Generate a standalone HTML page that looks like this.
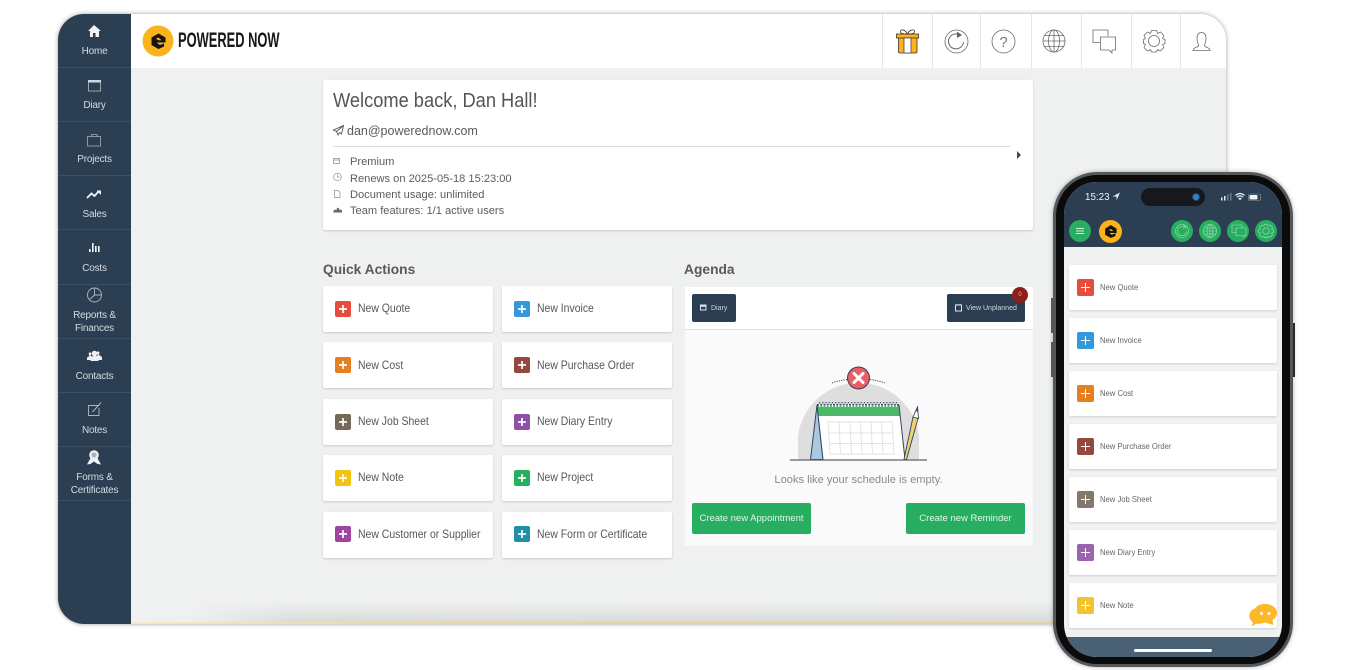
<!DOCTYPE html>
<html><head><meta charset="utf-8"><style>
*{box-sizing:border-box}
html,body{margin:0;padding:0;width:1353px;height:670px;overflow:hidden;background:#fff;font-family:"Liberation Sans",sans-serif}
.a{position:absolute}
.win{position:absolute;left:58px;top:14px;width:1168px;height:610px;border-radius:26px;background:#eff0f0;box-shadow:0 0 5px rgba(0,0,0,.38);overflow:hidden}
.side{position:absolute;left:58px;top:14px;width:73px;height:610px;background:#2c3e52;border-radius:26px 0 0 26px}
.sd{position:absolute;left:58px;width:73px;height:1px;background:#3d4f62}
.sl{position:absolute;left:58px;width:73px;text-align:center;color:#d5dbe0;font-size:10px;line-height:13px;letter-spacing:-.2px}
.vd{position:absolute;top:14px;width:1px;height:54px;background:#e6e6e6}
.card{position:absolute;background:#fff;box-shadow:0 1px 2px rgba(0,0,0,.16);border-radius:2px}
.qt{position:absolute;color:#585858;font-size:11.8px;line-height:14px;white-space:nowrap;transform:scaleX(.885);transform-origin:0 0}
.ic{position:absolute;width:16px;height:16px;border-radius:2px}
.ic:before{content:"";position:absolute;left:4px;top:7px;width:8px;height:2px;background:rgba(255,255,255,.85)}
.ic:after{content:"";position:absolute;left:7px;top:4px;width:2px;height:8px;background:rgba(255,255,255,.85)}
.row{position:absolute;left:350px;color:#5c5c5c;font-size:11.1px;line-height:14px;white-space:nowrap}
.gbtn{position:absolute;top:503px;width:119px;height:31px;background:#27ae60;border-radius:2px;color:#e4f5ea;font-size:9.5px;line-height:31px;text-align:center}
.dbtn{position:absolute;top:294px;height:28px;background:#2c3e52;border-radius:2px;color:#cfd6dc;font-size:7px;line-height:28px;padding-top:1px}
.pc{position:absolute;left:1069px;width:208px;height:45px;background:#fff;box-shadow:0 1px 2px rgba(0,0,0,.14);border-radius:2px}
.pi{position:absolute;left:1077px;width:17px;height:17px;border-radius:2px}
.pi:before{content:"";position:absolute;left:4px;top:8px;width:9px;height:1px;background:#fff}
.pi:after{content:"";position:absolute;left:8px;top:4px;width:1px;height:9px;background:#fff}
.pt{position:absolute;left:1100px;color:#666;font-size:8.2px;line-height:12px;white-space:nowrap;transform:scaleX(.935);transform-origin:0 0}
.pb{position:absolute;width:22px;height:22px;border-radius:50%;background:#27ae60;top:220px}
svg{position:absolute;overflow:visible}
</style></head><body>
<div class="win">
  <div class="a" style="left:73px;top:0;width:1095px;height:54px;background:#fff"></div>
  <div class="a" style="left:130px;top:588px;width:1038px;height:20px;background:linear-gradient(to bottom,rgba(205,205,205,0),rgba(210,210,210,.75));-webkit-mask-image:linear-gradient(to right,transparent,#000 110px);mask-image:linear-gradient(to right,transparent,#000 110px)"></div>
  <div class="a" style="left:73px;top:608px;width:1095px;height:2px;background:linear-gradient(to right,#f5e8c6,#e6d6a4 30%,#e2d29f)"></div>
</div>
<div class="side"></div>
<div class="sd" style="top:67px"></div><div class="sd" style="top:121px"></div><div class="sd" style="top:175px"></div><div class="sd" style="top:229px"></div><div class="sd" style="top:284px"></div><div class="sd" style="top:338px"></div><div class="sd" style="top:392px"></div><div class="sd" style="top:446px"></div><div class="sd" style="top:500px"></div>
<div class="sl" style="top:45px">Home</div>
<div class="sl" style="top:99px">Diary</div>
<div class="sl" style="top:153px">Projects</div>
<div class="sl" style="top:208px">Sales</div>
<div class="sl" style="top:262px">Costs</div>
<div class="sl" style="top:309px">Reports &amp;<br>Finances</div>
<div class="sl" style="top:370px">Contacts</div>
<div class="sl" style="top:424px">Notes</div>
<div class="sl" style="top:471px">Forms &amp;<br>Certificates</div>

<svg style="left:58px;top:14px" width="73" height="500" viewBox="0 0 73 500" fill="none">
  <path d="M36 11 L30 17 H32 V23 H35 V19 H37.500 V23 H41 V17 H43 Z" fill="#f2f4f5"/>
  <g stroke="#b4bdc6" stroke-width=".8"><rect x="30.500" y="66.500" width="12" height="10.500"/></g><rect x="30" y="66" width="13" height="2.500" fill="#d2d8dd"/>
  <g stroke="#a6b0ba" stroke-width=".8"><rect x="29.500" y="122.500" width="13" height="9.500"/><path d="M33.500 122.500V120.500H39V122.500"/></g>
  <path d="M29 184 L33.500 179.500 L36.500 182 L41 177" stroke="#f2f4f5" stroke-width="1.800"/><path d="M38.500 176.500H43V181Z" fill="#f2f4f5"/>
  <path d="M31 238h1.600v-3H31zM34 238h1.600v-9H34zM37 238h1.600v-6H37zM40 238h1.600v-6H40z" fill="#f2f4f5"/>
  <circle cx="36.500" cy="281" r="7" stroke="#aeb7c0" stroke-width=".9"/><path d="M36.500 274V281L31.500 285.500M36.500 281H43.500" stroke="#aeb7c0" stroke-width=".9"/>
  <path d="M29 346v-2.500l2.500-1.500-1-2.500 1.500-1.500 1.500 1.500-1 2 3 2v2.500z M37 346v-3l3-2-1.500-2.500 1.500-1.500 1.500 1.500-.5 2.500 3 2v3z" fill="#eef1f3"/><circle cx="36.500" cy="339.500" r="2.800" fill="#eef1f3"/><path d="M32.500 347v-3.500l4-2 4 2v3.500z" fill="#eef1f3"/>
  <path d="M41 391.500H30.500V401.500H41V394" stroke="#aeb7c0" stroke-width=".9"/><path d="M34.500 398L43 388.500" stroke="#c9d0d6" stroke-width=".9"/>
  <circle cx="36" cy="441" r="4.800" fill="#eef1f3"/><circle cx="36" cy="441" r="2.500" fill="#aab4bc"/><path d="M32.500 444L29 450.500L32.500 450L36 447.500L39.500 450L43 450.500L39.500 444Z" fill="#eef1f3"/>
</svg>

<svg style="left:142px;top:25px" width="32" height="32" viewBox="0 0 32 32">
  <circle cx="16" cy="16" r="15.500" fill="#fbb31d"/>
  <path d="M16.500 8.500L23.500 12.500V17.500H14.500L17.800 20L22 18.500V21.500L16.500 24L9.500 20V12.500ZM14 13.800L16.300 15.300H19.500L16.500 12.500Z" fill="#151515"/>
</svg>
<div class="a" style="left:178px;top:28px;font-size:21px;line-height:25px;font-weight:bold;color:#181818;white-space:nowrap;transform:scaleX(.613);transform-origin:0 0">POWERED NOW</div>

<div class="vd" style="left:882px"></div><div class="vd" style="left:932px"></div><div class="vd" style="left:980px"></div><div class="vd" style="left:1031px"></div><div class="vd" style="left:1081px"></div><div class="vd" style="left:1131px"></div><div class="vd" style="left:1180px"></div>

<svg style="left:890px;top:24px" width="330" height="34" viewBox="890 24 330 34" fill="none">
  <path d="M898.500 37H917V51.500Q917 53 915.500 53H900Q898.500 53 898.500 51.500Z" fill="#fbb31d" stroke="#3c3325" stroke-width=".8"/>
  <rect x="896.500" y="34" width="22" height="4" fill="#fbb31d" stroke="#3c3325" stroke-width=".8"/>
  <rect x="904" y="38" width="7" height="15" fill="#fff" stroke="#3c3325" stroke-width=".7"/>
  <path d="M907.500 34C905 29 900.500 29 900.500 31.500S904 34 907.500 34C911 34 914.500 34 914.500 31.500S910 29 907.500 34Z" stroke="#3c3325" stroke-width=".8"/>
  <circle cx="956.500" cy="41.500" r="11.500" stroke="#6a6a6a" stroke-width=".8"/>
  <path d="M960 35A7.500 7.500 0 1 0 963.500 42" stroke="#6a6a6a" stroke-width="1"/><path d="M957 31.500L962 35L957 38Z" fill="#5f5f5f"/>
  <circle cx="1003.500" cy="41.500" r="11.500" stroke="#6a6a6a" stroke-width=".8"/>
  <text x="1003.500" y="47" font-size="15" fill="#777" text-anchor="middle" font-family="Liberation Sans">?</text>
  <g stroke="#6a6a6a" stroke-width=".8"><circle cx="1054" cy="41" r="11"/><ellipse cx="1054" cy="41" rx="5.500" ry="11"/><path d="M1054 30V52M1043 41H1065M1044.500 35.500H1063.500M1044.500 46.500H1063.500"/></g>
  <path d="M1108 36V30H1093V42.500H1100" stroke="#6a6a6a" stroke-width=".8"/>
  <path d="M1100.500 37H1115.500V50H1112L1112 53L1109 50H1100.500Z" stroke="#6a6a6a" stroke-width=".8" fill="#fff"/>
  <path d="M1151.500 30.500H1156.500L1157.500 33.500L1160.500 32L1164 35.500L1162.500 38.500L1165 39.500V43.500L1162.500 44.500L1164 47.500L1160.500 51L1157.500 49.500L1156.500 52H1151.500L1150.500 49.500L1147.500 51L1144 47.500L1145.500 44.500L1143.500 43.500V39.500L1145.500 38.500L1144 35.500L1147.500 32L1150.500 33.500Z" stroke="#6a6a6a" stroke-width=".8" stroke-linejoin="round"/>
  <circle cx="1154" cy="41" r="5.500" stroke="#6a6a6a" stroke-width=".8"/>
  <path d="M1193 50.500C1193 47.500 1198 47.500 1198.500 45.500C1198.500 44 1197 42.500 1197 38C1197 34.500 1199 32.500 1201.500 32.500S1206 34.500 1206 38C1206 42.500 1204.500 44 1204.500 45.500C1205 47.500 1210 47.500 1210 50.500Z" stroke="#6a6a6a" stroke-width=".8"/>
</svg>

<!-- welcome -->
<div class="card" style="left:323px;top:80px;width:710px;height:150px"></div>
<div class="a" style="left:333px;top:88px;font-size:20.400px;line-height:26px;color:#555;white-space:nowrap;transform:scaleX(.895);transform-origin:0 0">Welcome back, Dan Hall!</div>
<svg style="left:333px;top:125px" width="12" height="11" viewBox="0 0 12 11" fill="none"><path d="M10.500 .5L.5 5L3.500 6.500L5 10L6.500 7.500L8.500 9ZM10.500 .5L3.500 6.500" stroke="#555" stroke-width=".9"/></svg>
<div class="a" style="left:347px;top:123px;font-size:12.500px;line-height:16px;color:#5a5a5a;white-space:nowrap">dan@powerednow.com</div>
<div class="a" style="left:333px;top:146px;width:677px;height:1px;background:#dcdcdc"></div>
<div class="a" style="left:1017px;top:151px;width:0;height:0;border-left:4.500px solid #444;border-top:4px solid transparent;border-bottom:4px solid transparent"></div>
<svg style="left:333px;top:156px" width="12" height="60" viewBox="0 0 12 60" fill="none" stroke="#8a8a8a" stroke-width=".7">
  <rect x=".5" y="2.500" width="6" height="5"/><path d="M.5 4H6.500"/>
  <circle cx="4.500" cy="21" r="3.800"/><path d="M4.500 18.500V21H6.500"/>
  <path d="M1.500 34.500H5L7 36.500V41.500H1.500Z"/>
  <path d="M.5 56.500V54.500L2 53.500L3.500 54.500V56.500ZM3.500 56.500V53L5 51.500L6.500 53V56.500ZM6.500 56.500V54.500L8 53.500L9 54.500V56.500Z" fill="#666" stroke="none"/>
</svg>
<div class="row" style="top:155px">Premium</div>
<div class="row" style="top:172px">Renews on 2025-05-18 15:23:00</div>
<div class="row" style="top:188px">Document usage: unlimited</div>
<div class="row" style="top:204px">Team features: 1/1 active users</div>

<!-- quick actions -->
<div class="a" style="left:323px;top:261px;font-size:13.800px;line-height:17px;font-weight:bold;color:#5a5a5a;white-space:nowrap">Quick Actions</div>
<div class="a" style="left:684px;top:261px;font-size:13.800px;line-height:17px;font-weight:bold;color:#5a5a5a;white-space:nowrap">Agenda</div>

<div class="card" style="left:323px;top:286px;width:170px;height:46px"></div><div class="ic" style="left:335px;top:301px;background:#e74c3c"></div><div class="qt" style="left:358px;top:301px">New Quote</div>
<div class="card" style="left:502px;top:286px;width:170px;height:46px"></div><div class="ic" style="left:514px;top:301px;background:#3498db"></div><div class="qt" style="left:537px;top:301px">New Invoice</div>
<div class="card" style="left:323px;top:342px;width:170px;height:46px"></div><div class="ic" style="left:335px;top:357px;background:#e67e22"></div><div class="qt" style="left:358px;top:358px">New Cost</div>
<div class="card" style="left:502px;top:342px;width:170px;height:46px"></div><div class="ic" style="left:514px;top:357px;background:#95483f"></div><div class="qt" style="left:537px;top:358px">New Purchase Order</div>
<div class="card" style="left:323px;top:399px;width:170px;height:46px"></div><div class="ic" style="left:335px;top:414px;background:#75695a"></div><div class="qt" style="left:358px;top:414px">New Job Sheet</div>
<div class="card" style="left:502px;top:399px;width:170px;height:46px"></div><div class="ic" style="left:514px;top:414px;background:#8e50a8"></div><div class="qt" style="left:537px;top:414px">New Diary Entry</div>
<div class="card" style="left:323px;top:455px;width:170px;height:46px"></div><div class="ic" style="left:335px;top:470px;background:#f1c40f"></div><div class="qt" style="left:358px;top:470px">New Note</div>
<div class="card" style="left:502px;top:455px;width:170px;height:46px"></div><div class="ic" style="left:514px;top:470px;background:#27ae60"></div><div class="qt" style="left:537px;top:470px">New Project</div>
<div class="card" style="left:323px;top:512px;width:170px;height:46px"></div><div class="ic" style="left:335px;top:526px;background:#a0459f"></div><div class="qt" style="left:358px;top:527px">New Customer or Supplier</div>
<div class="card" style="left:502px;top:512px;width:170px;height:46px"></div><div class="ic" style="left:514px;top:526px;background:#1f90a8"></div><div class="qt" style="left:537px;top:527px">New Form or Certificate</div>

<!-- agenda -->
<div class="a" style="left:685px;top:287px;width:348px;height:259px;background:#fafafa"></div>
<div class="a" style="left:685px;top:287px;width:348px;height:43px;background:#fff;border-bottom:1px solid #e2e2e2"></div>
<div class="dbtn" style="left:692px;width:44px;padding-left:19px">Diary</div>
<div class="dbtn" style="left:947px;width:78px;padding-left:19px;white-space:nowrap">View Unplanned</div>
<svg style="left:700px;top:304px" width="8" height="8" viewBox="0 0 8 8" fill="none"><rect x=".5" y="1" width="5.500" height="5" stroke="#dfe4e8"/><path d="M.5 1H6V2.800H.5Z" fill="#dfe4e8"/></svg>
<svg style="left:955px;top:304px" width="8" height="8" viewBox="0 0 8 8" fill="none"><rect x=".5" y="1" width="6" height="6" stroke="#dfe4e8"/><path d="M2 0V1.500M5 0V1.500" stroke="#dfe4e8"/></svg>
<div class="a" style="left:1012px;top:287px;width:16px;height:16px;border-radius:50%;background:#8f1f1a;color:#e7b4a5;font-size:6px;line-height:16px;text-align:center">0</div>

<svg style="left:780px;top:360px" width="160" height="110" viewBox="780 360 160 110" fill="none">
  <path d="M798 459.500V436A61 61 0 0 1 919 436V459.500Z" fill="#dedede"/>
  <path d="M832 383Q839 380.500 847 379.500M870 379.500Q878 380.500 885 383" stroke="#444" stroke-dasharray="1.200 1.200"/>
  <path d="M817 405L810.500 459.500H823Z" fill="#a9c9e2" stroke="#31445c" stroke-width="1"/>
  <path d="M817 405H899L905 459.500H823Z" fill="#fff"/>
  <path d="M817 404.500H899L900.500 416H818.500Z" fill="#4fb868"/>
  <path d="M817 405L823 459.500M899 405L905 459.500M817 404.500H899" stroke="#31445c" stroke-width="1"/>
  <path d="M819 405.500H897" stroke="#fff" stroke-width="3" stroke-dasharray="1.300 1.900"/>
  <path d="M819 402.700H897" stroke="#31445c" stroke-width="1.200" stroke-dasharray="1.300 1.900"/>
  <g stroke="#e3e3e3" stroke-width="1"><path d="M828 422H892L894 454H830Z"/><path d="M829 433H893M830 443.500H893.500M839 422L840.500 454M850 422L851.500 454M860.500 422L862 454M871 422L872.500 454M881.500 422L883 454"/></g>
  <path d="M904 459.500L913 417L918 418.500L906.500 459.500Z" fill="#eed36e" stroke="#31445c" stroke-width=".9"/>
  <path d="M913 417L917.500 407L918.500 418.500Z" fill="#fff" stroke="#31445c" stroke-width=".9"/>
  <path d="M916 411L918 407L918.200 412Z" fill="#31445c"/>
  <path d="M790 460H927" stroke="#5f6268" stroke-width="1.200"/>
  <circle cx="858.500" cy="378" r="11" fill="#ea5f66" stroke="#31445c" stroke-width="1"/>
  <path d="M854 373.500L863 382.500M863 373.500L854 382.500" stroke="#fff" stroke-width="3" stroke-linecap="round"/>
</svg>
<div class="a" style="left:685px;top:473px;width:347px;text-align:center;font-size:11.100px;line-height:14px;color:#8a8a8a">Looks like your schedule is empty.</div>
<div class="gbtn" style="left:692px">Create new Appointment</div>
<div class="gbtn" style="left:906px">Create new Reminder</div>

<!-- phone -->
<div class="a" style="left:1053px;top:172px;width:240px;height:495px;border-radius:44px;background:#0b0b0b;border:3px solid #55585a;box-shadow:0 0 5px rgba(0,0,0,.3)"></div>
<div class="a" style="left:1293px;top:323px;width:2px;height:54px;background:#2a2a2a"></div>
<div class="a" style="left:1051px;top:298px;width:2px;height:35px;background:#555"></div>
<div class="a" style="left:1051px;top:342px;width:2px;height:35px;background:#555"></div>
<div class="a" style="left:1064px;top:182px;width:218px;height:475px;border-radius:33px;background:#f0f1f1;overflow:hidden">
  <div class="a" style="left:0;top:0;width:218px;height:65px;background:#2c3e52"></div>
  <div class="a" style="left:0;top:455px;width:218px;height:20px;background:#4a6075"></div>
</div>
<div class="a" style="left:1141px;top:188px;width:64px;height:18px;border-radius:9px;background:#16181b"></div>
<div class="a" style="left:1193px;top:194px;width:6px;height:6px;border-radius:50%;background:#2e86c8;box-shadow:0 0 0 1px #25455f"></div>
<div class="a" style="left:1085px;top:191px;color:#eef1f3;font-size:9.800px;line-height:13px;white-space:nowrap">15:23</div>
<svg style="left:1112px;top:192px" width="9" height="9" viewBox="0 0 9 9"><path d="M8 .5L.5 4.500H4.500V8.500Z" fill="#e8ecef"/></svg>
<svg style="left:1220px;top:192px" width="46" height="10" viewBox="0 0 46 10" fill="none">
  <path d="M1 5.500h1.500v3H1zM4 4h1.500v4.500H4z" fill="#e8ecef"/><path d="M7 2.500h1.500v6H7zM10 1h1.500v7.500H10z" fill="#6c7c8b"/>
  <path d="M15.500 3.500Q20 -.5 24.500 3.500M17 5.300Q20 2.500 23 5.300" stroke="#e8ecef" stroke-width="1.200"/><path d="M18.300 6.500Q20 5 21.700 6.500L20 8.500Z" fill="#e8ecef"/>
  <rect x="28.500" y="2" width="12" height="6.500" rx="1.500" stroke="#8a98a5" stroke-width=".6"/><rect x="29.500" y="3" width="8" height="4.500" rx="1" fill="#f2f4f5"/>
</svg>

<div class="pb" style="left:1069px"></div>
<svg style="left:1075px;top:227px" width="10" height="8" viewBox="0 0 10 8"><path d="M1 1.500H9M1 4H9M1 6.500H9" stroke="#d6efdf" stroke-width="1"/></svg>
<svg style="left:1099px;top:220px" width="23" height="23" viewBox="0 0 32 32"><circle cx="16" cy="16" r="16" fill="#fbb31d"/><path d="M16.500 7L24.500 12V18H14.500L17.800 20.500L23 18.500V22L16.500 25L8.500 20.500V12ZM14 13.500L16.300 15.300H20L16.500 12.500Z" fill="#151515"/></svg>
<div class="pb" style="left:1171px"></div><div class="pb" style="left:1199px"></div><div class="pb" style="left:1227px"></div><div class="pb" style="left:1255px"></div>
<svg style="left:1171px;top:220px" width="106" height="22" viewBox="0 0 106 22" fill="none" stroke="#a9e0bd" stroke-width=".6">
  <circle cx="11" cy="11" r="6.500"/><path d="M13 7A4.500 4.500 0 1 0 15.500 11.500"/><path d="M12 4.500L15 7L12 8.500" />
  <circle cx="39" cy="11" r="6.500"/><ellipse cx="39" cy="11" rx="3" ry="6.500"/><path d="M32.500 11H45.500M39 4.500V17.500M33.500 8H44.500M33.500 14H44.500"/>
  <path d="M71 8V5H61V12.500H65"/><path d="M65 8H75V15.500H73V17L71.500 15.500H65Z"/>
  <path d="M93.500 4.500H96.500L97.200 6.300L99.300 5.500L101.500 7.700L100.600 9.700L102.500 10.500V12.500L100.600 13.300L101.500 15.300L99.300 17.500L97.200 16.700L96.500 18H93.500L92.800 16.700L90.700 17.500L88.500 15.300L89.400 13.300L87.500 12.500V10.500L89.400 9.700L88.500 7.700L90.700 5.500L92.800 6.300Z" transform="translate(0,-.3)"/><circle cx="95" cy="11" r="3.200"/>
</svg>

<div class="pc" style="top:265px"></div><div class="pi" style="top:279px;background:#e74c3c"></div><div class="pt" style="top:282px">New Quote</div>
<div class="pc" style="top:318px"></div><div class="pi" style="top:332px;background:#3498db"></div><div class="pt" style="top:335px">New Invoice</div>
<div class="pc" style="top:371px"></div><div class="pi" style="top:385px;background:#e67e22"></div><div class="pt" style="top:388px">New Cost</div>
<div class="pc" style="top:424px"></div><div class="pi" style="top:438px;background:#95483f"></div><div class="pt" style="top:441px">New Purchase Order</div>
<div class="pc" style="top:477px"></div><div class="pi" style="top:491px;background:#85786a"></div><div class="pt" style="top:494px">New Job Sheet</div>
<div class="pc" style="top:530px"></div><div class="pi" style="top:544px;background:#9b62ad"></div><div class="pt" style="top:547px">New Diary Entry</div>
<div class="pc" style="top:583px"></div><div class="pi" style="top:597px;background:#f1c232"></div><div class="pt" style="top:600px">New Note</div>
<svg style="left:1248px;top:603px" width="30" height="27" viewBox="0 0 30 27">
  <path d="M8 5C3 6 1 9 1 13C1 16 2.500 18 4.500 19.500L3 24L9 21C11 21.500 14 21 16 20Z" fill="#fbb827" stroke="#fff" stroke-width=".8"/>
  <path d="M17 1C10 1 5.500 5 5.500 10.500C5.500 16 10 19.500 17 19.500L25.500 22L24.500 17C27.500 15 29 13 29 10C29 5 24 1 17 1Z" fill="#fbb827"/>
  <circle cx="13.500" cy="10.500" r="1.500" fill="#fff"/><circle cx="21" cy="10.500" r="1.500" fill="#fff"/>
</svg>
<div class="a" style="left:1134px;top:649px;width:78px;height:3px;border-radius:2px;background:#fff"></div>
</body></html>
